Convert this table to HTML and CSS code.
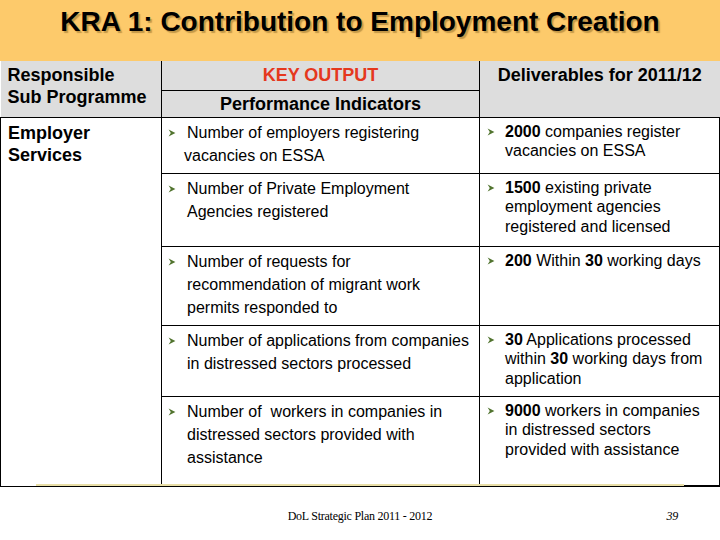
FILE: index.html
```html
<!DOCTYPE html>
<html lang="en">
<head>
<meta charset="utf-8">
<title>KRA 1: Contribution to Employment Creation</title>
<link rel="stylesheet" href="styles.css">
</head>
<body>
<div class="slide">
  <header class="band">
    <h1 class="title">KRA 1: Contribution to Employment Creation</h1>
  </header>

  <div class="table-wrap">
    <table class="kra">
      <colgroup>
        <col class="c-prog">
        <col class="c-ind">
        <col class="c-del">
      </colgroup>
      <thead>
        <tr class="h1row">
          <th class="h-sub" rowspan="2">Responsible<br>Sub Programme</th>
          <th class="h-key">KEY OUTPUT</th>
          <th class="h-del" rowspan="2">Deliverables for 2011/12</th>
        </tr>
        <tr class="h2row">
          <th class="h-pi">Performance Indicators</th>
        </tr>
      </thead>
      <tbody>
        <tr class="r1">
          <td class="prog" rowspan="5">Employer<br>Services</td>
          <td class="ind"><div class="item"><svg class="bul" viewBox="0 0 8 8" width="8" height="8"><path d="M0.6 0.6 L7.4 4 L0.6 7.4 L2.8 4 Z"/></svg><p>Number of employers registering<br><span class="outdent">vacancies on ESSA</span></p></div></td>
          <td class="del"><div class="item"><svg class="bul" viewBox="0 0 8 8" width="8" height="8"><path d="M0.6 0.6 L7.4 4 L0.6 7.4 L2.8 4 Z"/></svg><p><b>2000</b> companies register vacancies on ESSA</p></div></td>
        </tr>
        <tr class="r2">
          <td class="ind"><div class="item"><svg class="bul" viewBox="0 0 8 8" width="8" height="8"><path d="M0.6 0.6 L7.4 4 L0.6 7.4 L2.8 4 Z"/></svg><p>Number of Private Employment Agencies registered</p></div></td>
          <td class="del"><div class="item"><svg class="bul" viewBox="0 0 8 8" width="8" height="8"><path d="M0.6 0.6 L7.4 4 L0.6 7.4 L2.8 4 Z"/></svg><p><b>1500</b> existing private employment agencies registered and licensed</p></div></td>
        </tr>
        <tr class="r3">
          <td class="ind"><div class="item"><svg class="bul" viewBox="0 0 8 8" width="8" height="8"><path d="M0.6 0.6 L7.4 4 L0.6 7.4 L2.8 4 Z"/></svg><p>Number of requests for recommendation of migrant work permits responded to</p></div></td>
          <td class="del"><div class="item"><svg class="bul" viewBox="0 0 8 8" width="8" height="8"><path d="M0.6 0.6 L7.4 4 L0.6 7.4 L2.8 4 Z"/></svg><p><b>200</b> Within <b>30</b> working days</p></div></td>
        </tr>
        <tr class="r4">
          <td class="ind"><div class="item"><svg class="bul" viewBox="0 0 8 8" width="8" height="8"><path d="M0.6 0.6 L7.4 4 L0.6 7.4 L2.8 4 Z"/></svg><p>Number of applications from companies in distressed sectors processed</p></div></td>
          <td class="del"><div class="item"><svg class="bul" viewBox="0 0 8 8" width="8" height="8"><path d="M0.6 0.6 L7.4 4 L0.6 7.4 L2.8 4 Z"/></svg><p><b>30</b> Applications processed within <b>30</b> working days from application</p></div></td>
        </tr>
        <tr class="r5">
          <td class="ind"><div class="item"><svg class="bul" viewBox="0 0 8 8" width="8" height="8"><path d="M0.6 0.6 L7.4 4 L0.6 7.4 L2.8 4 Z"/></svg><p>Number of&nbsp; workers in companies in distressed sectors provided with assistance</p></div></td>
          <td class="del"><div class="item"><svg class="bul" viewBox="0 0 8 8" width="8" height="8"><path d="M0.6 0.6 L7.4 4 L0.6 7.4 L2.8 4 Z"/></svg><p><b>9000</b> workers in companies in distressed sectors provided with assistance</p></div></td>
        </tr>
      </tbody>
    </table>
  </div>

  <footer class="foot">
    <span class="foot-side"></span>
    <span class="foot-title">DoL Strategic Plan 2011 - 2012</span>
    <span class="foot-page">39</span>
  </footer>
</div>
</body>
</html>
```

FILE: styles.css
```css
html, body {
  margin: 0;
  padding: 0;
  background: #ffffff;
}

.slide {
  width: 720px;
  height: 540px;
  overflow: hidden;
  font-family: "Liberation Sans", Arial, sans-serif;
  color: #000;
}

.band {
  height: 61px;
  background: #fdca6b;
  box-sizing: border-box;
  padding-top: 6px;
}

.title {
  margin: 0;
  text-align: center;
  font-size: 28px;
  line-height: 32px;
  font-weight: bold;
  color: #000;
  text-shadow: 2px 2px 1px rgba(90, 60, 10, 0.35);
}

.table-wrap {
  position: relative;
  width: 719px;
}

.table-wrap::after {
  content: "";
  position: absolute;
  left: 36px;
  width: 648px;
  bottom: 1px;
  height: 2px;
  background: #e8dea6;
}

.kra {
  width: 719px;
  border-collapse: collapse;
  table-layout: fixed;
}

.c-prog { width: 161px; }
.c-ind { width: 318px; }
.c-del { width: 240px; }

.kra th {
  background: #dddddd;
  font-weight: bold;
  font-size: 18px;
  padding: 0;
  vertical-align: top;
}

.h1row { height: 29px; }
.h2row { height: 27px; }

.h-sub {
  text-align: left;
  line-height: 22px;
  padding: 3px 0 0 7px !important;
  border-bottom: 1px solid #000;
}

.h-key {
  color: #e5381d;
  line-height: 22px;
  padding-top: 3px !important;
  border-left: 1px solid #000;
  border-bottom: 1px solid #000;
}

.h-pi {
  line-height: 22px;
  padding-top: 2px !important;
  border-left: 1px solid #000;
  border-bottom: 1px solid #000;
}

.h-del {
  line-height: 22px;
  padding-top: 3px !important;
  border-left: 1px solid #000;
  border-bottom: 1px solid #000;
}

.kra td {
  vertical-align: top;
  padding: 0;
  border: 1px solid #000;
}

.r1 { height: 56px; }
.r2 { height: 73px; }
.r3 { height: 79px; }
.r4 { height: 71px; }
.r5 { height: 90px; }

.kra .r5 td { border-bottom-width: 2px; }

.prog {
  font-size: 18px;
  font-weight: bold;
  line-height: 22px;
  padding: 4px 0 0 7px !important;
}

.item {
  display: flex;
  align-items: flex-start;
}

.item p {
  margin: 0;
  font-size: 16px;
}

.bul {
  flex: none;
  width: 8px;
  height: 8px;
  fill: #52742f;
}

.ind .item {
  padding: 3px 6px 0 6px;
}

.ind .bul {
  margin-top: 8px;
  margin-right: 11px;
}

.ind .item p {
  line-height: 23px;
}

.outdent {
  margin-left: -3px;
}

.del .item {
  padding: 4px 4px 0 7px;
}

.del .bul {
  margin-top: 6px;
  margin-right: 10px;
}

.del .item p {
  line-height: 19.5px;
}

.foot {
  display: grid;
  grid-template-columns: 1fr auto 1fr;
  align-items: baseline;
  padding-top: 22px;
  font-family: "Liberation Serif", "Times New Roman", serif;
  font-size: 12px;
  letter-spacing: -0.25px;
}

.foot-title {
  text-align: center;
}

.foot-page {
  justify-self: end;
  padding-right: 42px;
  font-style: italic;
}
```
